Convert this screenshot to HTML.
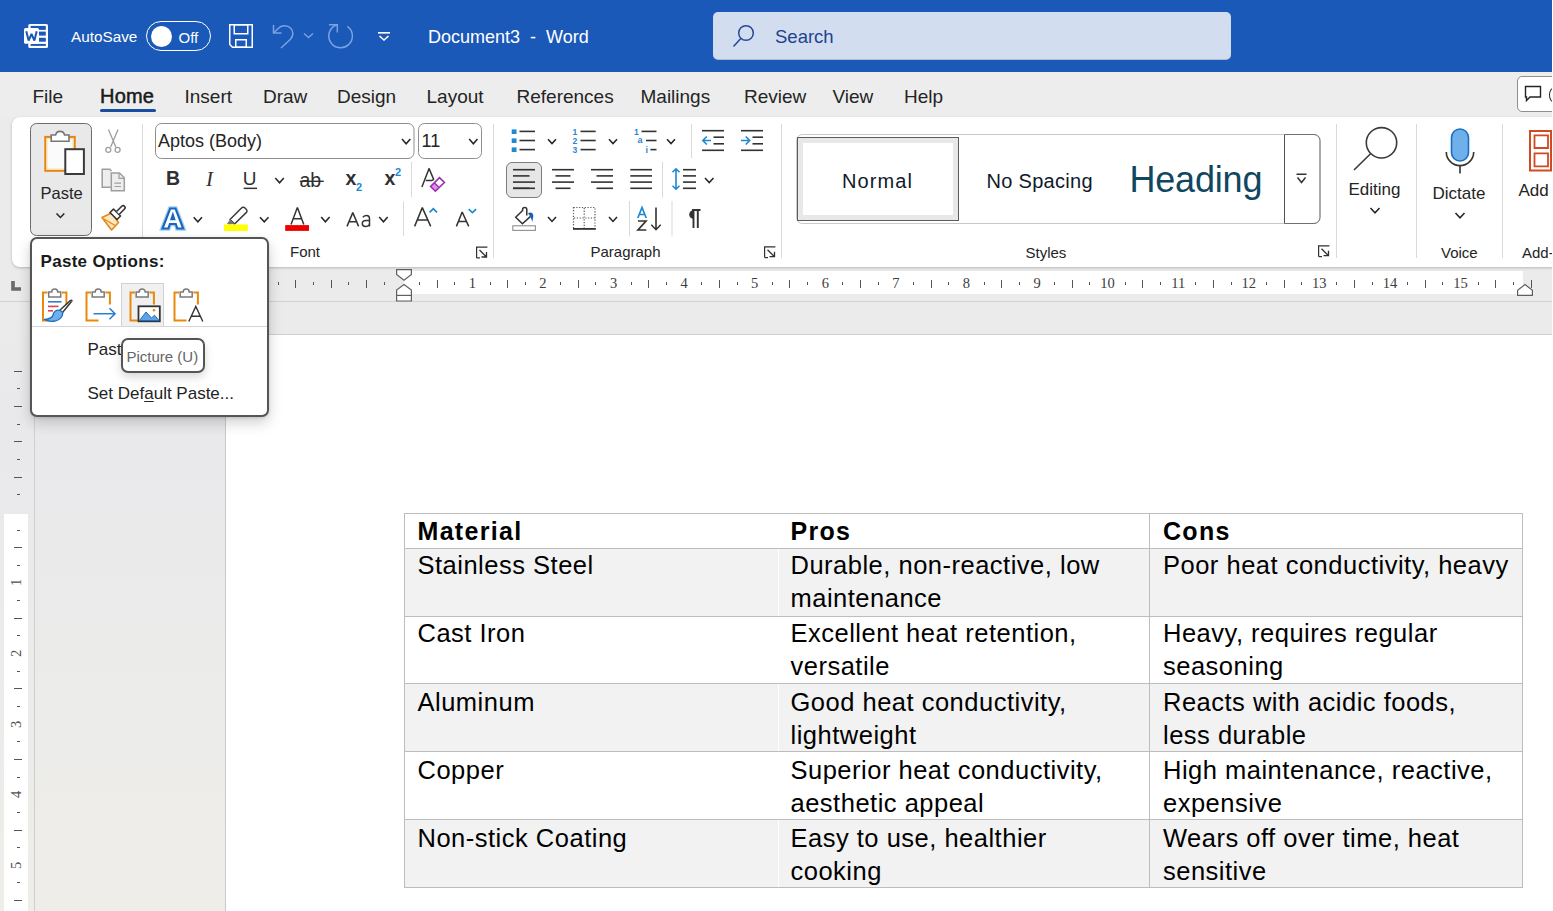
<!DOCTYPE html>
<html><head><meta charset="utf-8"><style>
html,body{margin:0;padding:0;width:1553px;height:911px;overflow:hidden;background:#e9e9eb;}
body{position:relative;font-family:"Liberation Sans",sans-serif;}
.a{position:absolute;}
.t{position:absolute;white-space:pre;line-height:1;}
svg{overflow:visible;}
</style></head><body>
<div class="a" style="left:0px;top:0px;width:1553px;height:911px;background:linear-gradient(to bottom, #ebebeb 0px, #ebebeb 330px, #e9e9ec 430px, #ebebea 650px, #eeede9 911px);"></div>
<div class="a" style="left:0px;top:0px;width:1553px;height:72px;background:#1a59b8;"></div>
<div class="a" style="left:0px;top:72px;width:1553px;height:45px;background:#ededed;"></div>
<div class="a" style="left:0px;top:267px;width:1553px;height:35px;background:#ebebeb;"></div>
<div class="a" style="left:0px;top:301px;width:1553px;height:1px;background:#d2d2d2;"></div>
<div class="a" style="left:226px;top:335px;width:1326px;height:576px;background:#ffffff;"></div>
<div class="a" style="left:225px;top:334px;width:1px;height:577px;background:#c9c9c9;"></div>
<div class="a" style="left:226px;top:334px;width:1326px;height:1px;background:#cfcfcf;"></div>
<div class="a" style="left:0px;top:302px;width:34px;height:609px;background:linear-gradient(to bottom, #ebebeb 0px, #e9e9ec 120px, #ebebea 350px, #eeede9 609px);"></div>
<div class="a" style="left:34px;top:302px;width:1px;height:609px;background:#cfcfcf;"></div>
<div class="a" style="left:4px;top:514px;width:24px;height:397px;background:#ffffff;"></div>
<svg class="a" style="left:24px;top:24px;" width="24" height="24" viewBox="0 0 24 24">
<rect x="4.3" y="0" width="19.7" height="24" rx="1.6" fill="#fff"/>
<rect x="6.6" y="1.9" width="15.2" height="4" fill="#1a59b8"/>
<rect x="15" y="7.6" width="6.8" height="4" fill="#1a59b8"/>
<rect x="15" y="13.8" width="6.8" height="3.9" fill="#1a59b8"/>
<rect x="6.6" y="19.9" width="15.2" height="2" fill="#1a59b8"/>
<rect x="0" y="4" width="15" height="15.8" rx="1.6" fill="#fff"/>
<path d="M2.3 7.3 L4.6 16.6 L7.5 10 L10.4 16.6 L12.7 7.3" fill="none" stroke="#1a59b8" stroke-width="2" stroke-linejoin="bevel"/>
</svg>
<div class="t " style="left:71px;top:29.35px;font-size:15.3px;color:#ffffff;font-weight:400;">AutoSave</div>
<div class="a" style="left:146px;top:21px;width:65px;height:30px;background:transparent;border:1.5px solid #fff;border-radius:15px;box-sizing:border-box;"></div>
<div class="a" style="left:150.5px;top:25.5px;width:21px;height:21px;background:#fff;border-radius:50%;"></div>
<div class="t " style="left:178.5px;top:29.50px;font-size:15px;color:#ffffff;font-weight:400;">Off</div>
<svg class="a" style="left:229px;top:24px;" width="24" height="24" viewBox="0 0 24 24">
<path d="M0.75 0.75 H23.25 V23.25 H3.5 L0.75 20.5 Z" fill="none" stroke="#fff" stroke-width="1.5"/>
<rect x="5.25" y="0.75" width="13.5" height="9" fill="none" stroke="#fff" stroke-width="1.5"/>
<rect x="6.75" y="15.75" width="10.5" height="7.5" fill="none" stroke="#fff" stroke-width="1.5"/>
</svg>
<svg class="a" style="left:272px;top:23px;" width="24" height="26" viewBox="0 0 24 26">
<path d="M1.5 2 V10 H9.5" fill="none" stroke="#7aa3e3" stroke-width="1.5"/>
<path d="M1.8 9.8 L7 4.8 C10 2 15.5 2 18.5 5 C21.8 8.3 21.5 13 18.5 16.2 L9 25" fill="none" stroke="#7aa3e3" stroke-width="1.5"/>
</svg>
<svg class="a" style="left:303px;top:32px;" width="11" height="7" viewBox="0 0 11 7"><path d="M1 1.5 L5.5 5.5 L10 1.5" fill="none" stroke="#7aa3e3" stroke-width="1.4"/></svg>
<svg class="a" style="left:327px;top:23px;" width="27" height="26" viewBox="0 0 27 26">
<path d="M2 1.8 H10.3 V9.5" fill="none" stroke="#7aa3e3" stroke-width="1.5"/>
<path d="M10 1.7 A11.8 11.8 0 1 0 20.4 3.3" fill="none" stroke="#7aa3e3" stroke-width="1.5"/>
</svg>
<svg class="a" style="left:377px;top:31px;" width="14" height="11" viewBox="0 0 14 11">
<rect x="1" y="1" width="12" height="1.6" fill="#fff"/>
<path d="M2.5 5 L7 9 L11.5 5" fill="none" stroke="#fff" stroke-width="1.6"/>
</svg>
<div class="t " style="left:428px;top:27.96px;font-size:18px;color:#ffffff;font-weight:400;">Document3&nbsp; -&nbsp; Word</div>
<div class="a" style="left:713px;top:12px;width:518px;height:48px;background:#d2def0;border-radius:5px;box-shadow:inset 0 -1px 0 rgba(0,0,0,0.15);"></div>
<svg class="a" style="left:732px;top:24px;" width="23" height="24" viewBox="0 0 23 24">
<circle cx="14" cy="9" r="7.3" fill="none" stroke="#25479a" stroke-width="1.5"/>
<line x1="9" y1="14.2" x2="1.5" y2="22.5" stroke="#25479a" stroke-width="1.5"/>
</svg>
<div class="t " style="left:775px;top:28.14px;font-size:18.5px;color:#22428f;font-weight:400;">Search</div>
<div class="t " style="left:32.5px;top:86.92px;font-size:19px;color:#242424;font-weight:400;">File</div>
<div class="t " style="left:100px;top:86.37px;font-size:20px;color:#1a1a1a;font-weight:400;letter-spacing:0.2px;-webkit-text-stroke:0.5px #1a1a1a;">Home</div>
<div class="t " style="left:184.5px;top:86.92px;font-size:19px;color:#242424;font-weight:400;">Insert</div>
<div class="t " style="left:263.0px;top:86.92px;font-size:19px;color:#242424;font-weight:400;">Draw</div>
<div class="t " style="left:337.0px;top:86.92px;font-size:19px;color:#242424;font-weight:400;">Design</div>
<div class="t " style="left:426.5px;top:86.92px;font-size:19px;color:#242424;font-weight:400;">Layout</div>
<div class="t " style="left:516.5px;top:86.92px;font-size:19px;color:#242424;font-weight:400;">References</div>
<div class="t " style="left:640.5px;top:86.92px;font-size:19px;color:#242424;font-weight:400;">Mailings</div>
<div class="t " style="left:744.0px;top:86.92px;font-size:19px;color:#242424;font-weight:400;">Review</div>
<div class="t " style="left:832.5px;top:86.92px;font-size:19px;color:#242424;font-weight:400;">View</div>
<div class="t " style="left:904.0px;top:86.92px;font-size:19px;color:#242424;font-weight:400;">Help</div>
<div class="a" style="left:100px;top:109px;width:56px;height:3px;background:#184d9f;border-radius:2px;"></div>
<div class="a" style="left:1517px;top:76px;width:50px;height:36px;background:#fff;border:1px solid #8f8f8f;border-radius:5px;box-sizing:border-box;"></div>
<svg class="a" style="left:1524px;top:85px;" width="18" height="18" viewBox="0 0 18 18"><path d="M1.5 1.5 H16.5 V12 H6 L2.5 15.5 V12 H1.5 Z" fill="none" stroke="#242424" stroke-width="1.4"/></svg>
<div class="a" style="left:1548.5px;top:88px;width:8px;height:14px;border:1.6px solid #242424;border-radius:50%;box-sizing:border-box;clip-path:inset(0 50% 0 0);"></div>
<div class="a" style="left:12px;top:117px;width:1560px;height:150px;background:#ffffff;border-radius:8px;box-shadow:0 1px 3px rgba(0,0,0,0.22);"></div>
<svg class="a" style="left:0;top:0" width="1553" height="911" viewBox="0 0 1553 911"><rect x="142" y="124" width="1" height="134" fill="#d9d9d9"/><rect x="493" y="124" width="1" height="134" fill="#d9d9d9"/><rect x="781" y="124" width="1" height="134" fill="#d9d9d9"/><rect x="1336" y="124" width="1" height="134" fill="#d9d9d9"/><rect x="1416" y="124" width="1" height="134" fill="#d9d9d9"/><rect x="1502" y="124" width="1" height="134" fill="#d9d9d9"/><rect x="30.5" y="123.5" width="61" height="112" rx="6" fill="#e9e9e9" stroke="#6c6c6c" stroke-width="1"/><rect x="45.3" y="136.9" width="29.4" height="33.9" fill="#fbfbfb" stroke="#e5840f" stroke-width="2"/><rect x="47" y="138.6" width="26" height="30.5" fill="none" stroke="#fcd9a0" stroke-width="1"/><path d="M51.2 141.2 V135 H55.6 A4.6 4.6 0 0 1 64.6 135 H69 V141.2 Z" fill="#fff" stroke="#777" stroke-width="1.6"/><rect x="65.3" y="149.2" width="18.6" height="24.8" fill="#fff" stroke="#3a3a3a" stroke-width="2"/><path d="M56.5 213.5 L60.4 217.5 L64.3 213.5" fill="none" stroke="#262626" stroke-width="1.55"/><path d="M108.5 129.5 L115.8 147 M118 129.5 L110.7 147" fill="none" stroke="#9e9e9e" stroke-width="1.3"/><circle cx="108.3" cy="149.8" r="2.5" fill="none" stroke="#9e9e9e" stroke-width="1.3"/><circle cx="117.6" cy="149.8" r="2.5" fill="none" stroke="#9e9e9e" stroke-width="1.3"/><path d="M110.8 187.3 H102.2 V169.3 H109.8 L111.5 171" fill="#eee" stroke="#9e9e9e" stroke-width="1.5"/><path d="M111.3 173 H119.5 L124.3 177.8 V190.7 H111.3 Z" fill="#eee" stroke="#9e9e9e" stroke-width="1.5"/><path d="M119 173 V178.3 H124.3" fill="none" stroke="#9e9e9e" stroke-width="1.2"/><path d="M114.5 183.2 H121 M114.5 186.5 H121" stroke="#9e9e9e" stroke-width="1.2"/><path d="M102 217.5 L111.5 213 L118.5 222.5 L111.5 230 Z" fill="#fde7c2" stroke="#e38917" stroke-width="1.6" stroke-linejoin="round"/><path d="M104 219 L116 226" stroke="#e38917" stroke-width="1.3"/><path d="M110 212.5 L113.5 209 L120.5 216 L117 219.5 Z" fill="#fff" stroke="#333" stroke-width="1.6" stroke-linejoin="round"/><path d="M116.5 211.5 L121.8 206.3 A1.9 1.9 0 0 1 124.5 209 L119.3 214.3" fill="#fff" stroke="#333" stroke-width="1.6" stroke-linejoin="round"/><rect x="155.5" y="123.5" width="258.5" height="35" rx="6" fill="#fff" stroke="#8e8e8e" stroke-width="1"/><path d="M402 139 L406.15 143.8 L410.3 139" fill="none" stroke="#262626" stroke-width="1.55"/><rect x="418.5" y="123.5" width="63" height="35" rx="6" fill="#fff" stroke="#8e8e8e" stroke-width="1"/><path d="M469.2 139 L473.35 143.8 L477.5 139" fill="none" stroke="#262626" stroke-width="1.55"/><rect x="243.7" y="187.6" width="13.3" height="1.5" fill="#333"/><path d="M275.3 178 L279.55 182.8 L283.8 178" fill="none" stroke="#262626" stroke-width="1.55"/><rect x="299.8" y="180.6" width="24" height="1.4" fill="#333"/><rect x="411" y="162" width="1" height="35" fill="#d9d9d9"/><path d="M421.9 187 L429.1 168.6 L433.6 179.3 Q433 180.4 431.5 180.4 H425.8" fill="none" stroke="#333" stroke-width="1.5" stroke-linejoin="round"/><path d="M430.8 186.6 L434.6 183.1 L438.1 186.9 L435.4 191.2 Z" fill="#e98cf2"/><path d="M439.5 177.6 L444.4 182.5 L435.4 191.2 L430.6 186.5 Z" fill="none" stroke="#9a2fb0" stroke-width="1.6" stroke-linejoin="miter"/><path d="M434.6 183 L438.6 187" stroke="#9a2fb0" stroke-width="1.5"/><path d="M162.5 228.5 L170.2 208.5 H175.5 L183.2 228.5 H177.3 L175.8 224 H169.9 L168.4 228.5 Z M171.4 219.3 H174.3 L172.85 214.8 Z" fill="#fff" stroke="#9fd0f5" stroke-width="4.6" stroke-linejoin="miter"/><path d="M162.5 228.5 L170.2 208.5 H175.5 L183.2 228.5 H177.3 L175.8 224 H169.9 L168.4 228.5 Z M171.4 219.3 H174.3 L172.85 214.8 Z" fill="#fff" stroke="#1a66bd" stroke-width="2.1" stroke-linejoin="miter"/><path d="M193.7 217.3 L197.85 221.8 L202 217.3" fill="none" stroke="#262626" stroke-width="1.55"/><path d="M230 219.5 L241.5 208 A2.3 2.3 0 0 1 245 208 L246.2 209.2 A2.3 2.3 0 0 1 246.2 212.6 L234.5 224 Z" fill="#fff" stroke="#3a3a3a" stroke-width="1.5" stroke-linejoin="round"/><path d="M230 219.5 L227 223.8 L229 224.5 L234.5 224 Z" fill="#777"/><rect x="224" y="224.5" width="23.8" height="6.5" fill="#ffff00"/><path d="M260 217.3 L264.25 221.8 L268.5 217.3" fill="none" stroke="#262626" stroke-width="1.55"/><rect x="285.2" y="225.1" width="23.8" height="5.8" fill="#ee0000"/><path d="M291 224.5 L297.4 207.6 L303.8 224.5 M293.78 218.75 H301.02" fill="none" stroke="#333" stroke-width="1.5" stroke-linejoin="bevel"/><path d="M347 226.4 L352.8 212.6 L358.6 226.4 M349.57 221.71 H356.03" fill="none" stroke="#333" stroke-width="1.5" stroke-linejoin="bevel"/><path d="M362.8 217.3 Q364.5 215.6 366.5 215.6 Q369.5 215.6 369.5 219 V226.4 M369.5 220.6 H366 Q362.3 220.6 362.3 223.5 Q362.3 226.5 365.5 226.5 Q368 226.5 369.5 224.3" fill="none" stroke="#333" stroke-width="1.5"/><path d="M414.6 226.4 L422.3 207.6 L430.7 226.4 M417.82 220.01 H427.24" fill="none" stroke="#333" stroke-width="1.5" stroke-linejoin="bevel"/><path d="M456.4 226.4 L462.2 212 L468.7 226.4 M458.97 221.50 H465.89" fill="none" stroke="#333" stroke-width="1.5" stroke-linejoin="bevel"/><path d="M321.2 217 L325.4 221.8 L329.6 217" fill="none" stroke="#262626" stroke-width="1.55"/><path d="M379.2 217 L383.45 221.8 L387.7 217" fill="none" stroke="#262626" stroke-width="1.55"/><rect x="403" y="201.5" width="1" height="34.5" fill="#d9d9d9"/><path d="M429.6 212.4 L433.3 208.7 L437 212.4" fill="none" stroke="#1e88d2" stroke-width="1.7"/><path d="M468.7 209.2 L472.4 212.6 L476.1 209.2" fill="none" stroke="#1e88d2" stroke-width="1.7"/><path d="M476.6 257.9 V247.1 H487.4" fill="none" stroke="#303030" stroke-width="1.2"/><path d="M479.5 250.0 L486.5 257.0 M481.5 257.0 H486.5 V252.0" fill="none" stroke="#303030" stroke-width="1.3"/><path d="M476.6 257.9 H480" fill="none" stroke="#303030" stroke-width="1.2"/><rect x="511.7" y="129.39999999999998" width="4.8" height="4.6" fill="#1e88d2"/><rect x="511.7" y="138.39999999999998" width="4.8" height="4.6" fill="#1e88d2"/><rect x="511.7" y="147.39999999999998" width="4.8" height="4.6" fill="#1e88d2"/><rect x="519.5" y="130.6" width="15.5" height="1.6" fill="#333"/><rect x="519.5" y="139.7" width="15.5" height="1.6" fill="#333"/><rect x="519.5" y="148.79999999999998" width="15.5" height="1.6" fill="#333"/><path d="M548 139.2 L552.0 143.6 L556 139.2" fill="none" stroke="#262626" stroke-width="1.55"/><rect x="580.5" y="130.6" width="15.200000000000045" height="1.6" fill="#333"/><rect x="580.5" y="139.7" width="15.200000000000045" height="1.6" fill="#333"/><rect x="580.5" y="148.79999999999998" width="15.200000000000045" height="1.6" fill="#333"/><path d="M609 139.2 L613.0 143.6 L617 139.2" fill="none" stroke="#262626" stroke-width="1.55"/><rect x="641.5" y="130.6" width="15.0" height="1.6" fill="#333"/><rect x="646" y="139.7" width="10.5" height="1.6" fill="#333"/><rect x="650.4" y="148.79999999999998" width="6.100000000000023" height="1.6" fill="#333"/><path d="M667 139.2 L671.0 143.6 L675 139.2" fill="none" stroke="#262626" stroke-width="1.55"/><rect x="691" y="124" width="1" height="34" fill="#d9d9d9"/><rect x="702" y="129.89999999999998" width="22" height="1.6" fill="#333"/><rect x="702" y="149.5" width="22" height="1.6" fill="#333"/><rect x="713.5" y="136.39999999999998" width="10.5" height="1.6" fill="#333"/><rect x="713.5" y="143.0" width="10.5" height="1.6" fill="#333"/><path d="M711 140.5 H703 M706.8 136.5 L702.8 140.5 L706.8 144.5" fill="none" stroke="#1e88d2" stroke-width="1.6"/><rect x="741" y="129.89999999999998" width="22" height="1.6" fill="#333"/><rect x="741" y="149.5" width="22" height="1.6" fill="#333"/><rect x="752.5" y="136.39999999999998" width="10.5" height="1.6" fill="#333"/><rect x="752.5" y="143.0" width="10.5" height="1.6" fill="#333"/><path d="M741 140.5 H749.5 M745.7 136.5 L749.7 140.5 L745.7 144.5" fill="none" stroke="#1e88d2" stroke-width="1.6"/><rect x="506.5" y="162.5" width="35" height="35" rx="5.5" fill="#e6e6e6" stroke="#7c7c7c" stroke-width="1"/><rect x="513" y="168.89999999999998" width="22" height="1.6" fill="#333"/><rect x="513" y="187.5" width="22" height="1.6" fill="#333"/><rect x="513" y="175.1" width="16.5" height="1.6" fill="#333"/><rect x="513" y="181.29999999999998" width="22" height="1.6" fill="#333"/><rect x="513" y="187.5" width="16.5" height="1.6" fill="#333"/><rect x="552" y="168.89999999999998" width="22" height="1.6" fill="#333"/><rect x="552" y="181.29999999999998" width="22" height="1.6" fill="#333"/><rect x="555.5" y="175.1" width="15.0" height="1.6" fill="#333"/><rect x="555.5" y="187.5" width="15.0" height="1.6" fill="#333"/><rect x="591" y="168.89999999999998" width="22" height="1.6" fill="#333"/><rect x="591" y="181.29999999999998" width="22" height="1.6" fill="#333"/><rect x="596.5" y="175.1" width="16.5" height="1.6" fill="#333"/><rect x="596.5" y="187.5" width="16.5" height="1.6" fill="#333"/><rect x="630.3" y="168.89999999999998" width="21.700000000000045" height="1.6" fill="#333"/><rect x="630.3" y="175.1" width="21.700000000000045" height="1.6" fill="#333"/><rect x="630.3" y="181.29999999999998" width="21.700000000000045" height="1.6" fill="#333"/><rect x="630.3" y="187.5" width="21.700000000000045" height="1.6" fill="#333"/><rect x="662" y="162" width="1" height="35.5" fill="#d9d9d9"/><rect x="683" y="168.89999999999998" width="13" height="1.6" fill="#333"/><rect x="683" y="175.1" width="13" height="1.6" fill="#333"/><rect x="683" y="181.29999999999998" width="13" height="1.6" fill="#333"/><rect x="683" y="187.5" width="13" height="1.6" fill="#333"/><path d="M676 169 V189 M672.5 172.3 L676 168.8 L679.5 172.3 M672.5 185.7 L676 189.2 L679.5 185.7" fill="none" stroke="#1e88d2" stroke-width="1.6"/><path d="M705 178 L709.25 182.6 L713.5 178" fill="none" stroke="#262626" stroke-width="1.55"/><path d="M522.4 210.8 L515.7 217.3 L522.4 223.8 L530.3 216.6" fill="none" stroke="#333" stroke-width="1.5" stroke-linejoin="miter"/><path d="M522.6 211 V209.6 A2.1 2.1 0 0 1 526.8 209.6 V215.4" fill="none" stroke="#333" stroke-width="1.5"/><path d="M528 213.2 C530.5 211.3 533.8 213 533.3 216.5 C533 218.5 532.6 220.2 532.4 222 C531.6 219 530.3 216.3 528 213.2 Z" fill="#1a5fb4"/><rect x="512.8" y="225.8" width="22.6" height="4.6" fill="#fff" stroke="#8f8f8f" stroke-width="1.1"/><path d="M548 217 L552.0 221.4 L556 217" fill="none" stroke="#262626" stroke-width="1.55"/><rect x="573.5" y="207.5" width="21.5" height="21" fill="none" stroke="#555" stroke-width="1.2" stroke-dasharray="1.2 1.6"/><path d="M584.2 208 V228 M574 218 H594.5" fill="none" stroke="#555" stroke-width="1.2" stroke-dasharray="1.2 1.6"/><rect x="573" y="228" width="22.8" height="1.8" fill="#333"/><path d="M609 217 L613.0 221.4 L617 217" fill="none" stroke="#262626" stroke-width="1.55"/><rect x="629" y="201" width="1" height="35.5" fill="#d9d9d9"/><path d="M637.8 218 L642 207.5 L646.2 218 M639.2 214.5 H644.8" fill="none" stroke="#1e88d2" stroke-width="1.7"/><path d="M638 221 H646 L638 230 H646.3" fill="none" stroke="#333" stroke-width="1.7"/><path d="M656 207.5 V229.5 M651.3 224.8 L656 229.7 L660.7 224.8" fill="none" stroke="#333" stroke-width="1.6"/><rect x="671.5" y="201" width="1" height="35.5" fill="#d9d9d9"/><path d="M692 210 H700.5 M693.5 210 V228 M697.8 210 V228" fill="none" stroke="#333" stroke-width="1.9"/><path d="M693.5 210.2 A4.3 4.3 0 0 0 693.5 218.8 Z" fill="#333"/><path d="M764.6 257.59999999999997 V246.79999999999998 H775.4" fill="none" stroke="#303030" stroke-width="1.2"/><path d="M767.5 249.7 L774.5 256.7 M769.5 256.7 H774.5 V251.7" fill="none" stroke="#303030" stroke-width="1.3"/><path d="M764.6 257.59999999999997 H768" fill="none" stroke="#303030" stroke-width="1.2"/><rect x="796.5" y="134.5" width="523.5" height="89" rx="6" fill="#fff" stroke="#c9c9c9" stroke-width="1"/><rect x="797.5" y="137.5" width="161" height="83" fill="#fff" stroke="#5c5c5c" stroke-width="1"/><rect x="800.5" y="140.5" width="155" height="77" fill="none" stroke="#e8e8e8" stroke-width="5"/><path d="M1284.5 134.5 V223.5" stroke="#505050" stroke-width="1"/><path d="M1284.5 134.5 H1314 A6 6 0 0 1 1320 140.5 V217.5 A6 6 0 0 1 1314 223.5 H1284.5" fill="none" stroke="#707070" stroke-width="1"/><rect x="1296.5" y="173.5" width="10" height="1.5" fill="#333"/><path d="M1297.5 177.5 L1301.5 182.5 L1305.5 177.5" fill="none" stroke="#333" stroke-width="1.5"/><path d="M1318.6 256.59999999999997 V245.79999999999998 H1329.4" fill="none" stroke="#303030" stroke-width="1.2"/><path d="M1321.5 248.7 L1328.5 255.7 M1323.5 255.7 H1328.5 V250.7" fill="none" stroke="#303030" stroke-width="1.3"/><path d="M1318.6 256.59999999999997 H1322" fill="none" stroke="#303030" stroke-width="1.2"/><circle cx="1381.5" cy="142.8" r="15.2" fill="none" stroke="#3a3a3a" stroke-width="1.6"/><path d="M1370.8 153.5 L1354 170" stroke="#3a3a3a" stroke-width="1.6"/><path d="M1370.5 208 L1375.0 212.8 L1379.5 208" fill="none" stroke="#262626" stroke-width="1.55"/><rect x="1451.5" y="129" width="17" height="32" rx="8.5" fill="#6fb0ea" stroke="#1a6fc4" stroke-width="1.6"/><path d="M1446.3 152 A13.7 13.7 0 0 0 1473.7 152 M1460 166 V173.5" fill="none" stroke="#333" stroke-width="1.6"/><path d="M1455.5 213 L1460.0 217.8 L1464.5 213" fill="none" stroke="#262626" stroke-width="1.55"/><rect x="1530" y="131" width="40" height="39.5" fill="none" stroke="#d04a22" stroke-width="2"/><path d="M1534.5 135.3 H1548 V148 H1534.5 Z M1534.5 153.3 H1548 V166.3 H1534.5 Z" fill="none" stroke="#d04a22" stroke-width="1.8"/><rect x="1550" y="131" width="2" height="40" fill="#d04a22"/></svg>
<div class="t " style="left:40.5px;top:184.53px;font-size:16.5px;color:#242424;font-weight:400;">Paste</div>
<div class="t " style="left:158px;top:132.26px;font-size:18px;color:#242424;font-weight:400;">Aptos (Body)</div>
<div class="t " style="left:421.5px;top:132.46px;font-size:18px;color:#242424;font-weight:400;">11</div>
<div class="t " style="left:166px;top:169.09px;font-size:19.5px;color:#303030;font-weight:700;">B</div>
<div class="t" style="left:206px;top:169px;font-size:21px;font-family:'Liberation Serif',serif;font-style:italic;color:#303030;">I</div>
<div class="t " style="left:242.7px;top:169.22px;font-size:19px;color:#303030;font-weight:400;">U</div>
<div class="t " style="left:299.5px;top:170.79px;font-size:19.5px;color:#303030;font-weight:400;">ab</div>
<div class="t " style="left:345.5px;top:169.49px;font-size:19.5px;color:#303030;font-weight:700;">x</div>
<div class="t " style="left:356px;top:182.39px;font-size:11px;color:#1e88d2;font-weight:700;">2</div>
<div class="t " style="left:384.5px;top:169.49px;font-size:19.5px;color:#303030;font-weight:700;">x</div>
<div class="t " style="left:395px;top:167.19px;font-size:11px;color:#1e88d2;font-weight:700;">2</div>
<div class="t " style="left:290px;top:244.40px;font-size:15px;color:#242424;font-weight:400;">Font</div>
<div class="t " style="left:590.5px;top:244.30px;font-size:15px;color:#242424;font-weight:400;">Paragraph</div>
<div class="t " style="left:1025.5px;top:244.70px;font-size:15px;color:#242424;font-weight:400;">Styles</div>
<div class="t " style="left:842px;top:170.57px;font-size:20px;color:#0e1a2b;font-weight:400;letter-spacing:1.1px;">Normal</div>
<div class="t " style="left:986.5px;top:170.57px;font-size:20px;color:#0e1a2b;font-weight:400;letter-spacing:0.3px;">No Spacing</div>
<div class="t " style="left:1129.5px;top:162.03px;font-size:36px;color:#0f4761;font-weight:400;letter-spacing:-0.2px;">Heading</div>
<div class="t " style="left:1348.5px;top:180.61px;font-size:17px;color:#242424;font-weight:400;">Editing</div>
<div class="t " style="left:1432.5px;top:185.01px;font-size:17px;color:#242424;font-weight:400;">Dictate</div>
<div class="t " style="left:1441px;top:244.90px;font-size:15px;color:#242424;font-weight:400;">Voice</div>
<div class="t " style="left:1518.5px;top:182.11px;font-size:17px;color:#242424;font-weight:400;">Add</div>
<div class="t " style="left:1522px;top:244.90px;font-size:15px;color:#242424;font-weight:400;">Add-</div>
<div class="t " style="left:572.5px;top:127.72px;font-size:8.6px;color:#2f86cc;font-weight:700;">1</div>
<div class="t " style="left:572.5px;top:136.72px;font-size:8.6px;color:#2f86cc;font-weight:700;">2</div>
<div class="t " style="left:572.5px;top:145.92px;font-size:8.6px;color:#2f86cc;font-weight:700;">3</div>
<div class="t " style="left:634px;top:127.72px;font-size:8.6px;color:#2f86cc;font-weight:700;">1</div>
<div class="t " style="left:637.6px;top:136.38px;font-size:9px;color:#2f86cc;font-weight:700;">a</div>
<div class="t " style="left:645.5px;top:145.58px;font-size:9px;color:#2f86cc;font-weight:700;">i</div>
<div class="a" style="left:404px;top:271px;width:1119px;height:23px;background:#ffffff;"></div>
<svg class="a" style="left:0;top:0" width="1553" height="911" viewBox="0 0 1553 911"><rect x="278" y="282" width="1" height="3" fill="#555"/><rect x="295" y="280" width="1" height="8" fill="#555"/><rect x="313" y="282" width="1" height="3" fill="#555"/><rect x="331" y="280" width="1" height="8" fill="#555"/><rect x="348" y="282" width="1" height="3" fill="#555"/><rect x="366" y="280" width="1" height="8" fill="#555"/><rect x="384" y="282" width="1" height="3" fill="#555"/><rect x="419" y="282" width="1" height="3" fill="#555"/><rect x="437" y="280" width="1" height="8" fill="#555"/><rect x="454" y="282" width="1" height="3" fill="#555"/><rect x="490" y="282" width="1" height="3" fill="#555"/><rect x="507" y="280" width="1" height="8" fill="#555"/><rect x="525" y="282" width="1" height="3" fill="#555"/><rect x="560" y="282" width="1" height="3" fill="#555"/><rect x="578" y="280" width="1" height="8" fill="#555"/><rect x="595" y="282" width="1" height="3" fill="#555"/><rect x="631" y="282" width="1" height="3" fill="#555"/><rect x="648" y="280" width="1" height="8" fill="#555"/><rect x="666" y="282" width="1" height="3" fill="#555"/><rect x="701" y="282" width="1" height="3" fill="#555"/><rect x="719" y="280" width="1" height="8" fill="#555"/><rect x="737" y="282" width="1" height="3" fill="#555"/><rect x="772" y="282" width="1" height="3" fill="#555"/><rect x="789" y="280" width="1" height="8" fill="#555"/><rect x="807" y="282" width="1" height="3" fill="#555"/><rect x="842" y="282" width="1" height="3" fill="#555"/><rect x="860" y="280" width="1" height="8" fill="#555"/><rect x="878" y="282" width="1" height="3" fill="#555"/><rect x="913" y="282" width="1" height="3" fill="#555"/><rect x="931" y="280" width="1" height="8" fill="#555"/><rect x="948" y="282" width="1" height="3" fill="#555"/><rect x="984" y="282" width="1" height="3" fill="#555"/><rect x="1001" y="280" width="1" height="8" fill="#555"/><rect x="1019" y="282" width="1" height="3" fill="#555"/><rect x="1054" y="282" width="1" height="3" fill="#555"/><rect x="1072" y="280" width="1" height="8" fill="#555"/><rect x="1089" y="282" width="1" height="3" fill="#555"/><rect x="1125" y="282" width="1" height="3" fill="#555"/><rect x="1142" y="280" width="1" height="8" fill="#555"/><rect x="1160" y="282" width="1" height="3" fill="#555"/><rect x="1195" y="282" width="1" height="3" fill="#555"/><rect x="1213" y="280" width="1" height="8" fill="#555"/><rect x="1231" y="282" width="1" height="3" fill="#555"/><rect x="1266" y="282" width="1" height="3" fill="#555"/><rect x="1284" y="280" width="1" height="8" fill="#555"/><rect x="1301" y="282" width="1" height="3" fill="#555"/><rect x="1336" y="282" width="1" height="3" fill="#555"/><rect x="1354" y="280" width="1" height="8" fill="#555"/><rect x="1372" y="282" width="1" height="3" fill="#555"/><rect x="1407" y="282" width="1" height="3" fill="#555"/><rect x="1425" y="280" width="1" height="8" fill="#555"/><rect x="1442" y="282" width="1" height="3" fill="#555"/><rect x="1478" y="282" width="1" height="3" fill="#555"/><rect x="1495" y="280" width="1" height="8" fill="#555"/><rect x="1513" y="282" width="1" height="3" fill="#555"/><rect x="1531" y="280" width="1" height="8" fill="#555"/><path d="M396.6 269.7 H411.4 V274.5 L404 280.3 L396.6 274.5 Z" fill="#fff" stroke="#606060" stroke-width="1.2"/><path d="M404 284.4 L411.4 290 V301 H396.6 V290 Z" fill="#fff" stroke="#606060" stroke-width="1.2"/><path d="M396.6 295.4 H411.4" stroke="#606060" stroke-width="1.2"/><path d="M1525 284.6 L1532.4 290.2 V295.3 H1517.6 V290.2 Z" fill="#fff" stroke="#606060" stroke-width="1.2"/><path d="M13 281 V289 H21" fill="none" stroke="#6a6a6a" stroke-width="3.6"/><rect x="14" y="371" width="8" height="1" fill="#555"/><rect x="17" y="388" width="3" height="1" fill="#555"/><rect x="14" y="406" width="8" height="1" fill="#555"/><rect x="17" y="424" width="3" height="1" fill="#555"/><rect x="14" y="441" width="8" height="1" fill="#555"/><rect x="17" y="459" width="3" height="1" fill="#555"/><rect x="14" y="477" width="8" height="1" fill="#555"/><rect x="17" y="494" width="3" height="1" fill="#555"/><rect x="17" y="530" width="3" height="1" fill="#555"/><rect x="14" y="547" width="8" height="1" fill="#555"/><rect x="17" y="565" width="3" height="1" fill="#555"/><rect x="17" y="600" width="3" height="1" fill="#555"/><rect x="14" y="618" width="8" height="1" fill="#555"/><rect x="17" y="635" width="3" height="1" fill="#555"/><rect x="17" y="671" width="3" height="1" fill="#555"/><rect x="14" y="688" width="8" height="1" fill="#555"/><rect x="17" y="706" width="3" height="1" fill="#555"/><rect x="17" y="741" width="3" height="1" fill="#555"/><rect x="14" y="759" width="8" height="1" fill="#555"/><rect x="17" y="777" width="3" height="1" fill="#555"/><rect x="17" y="812" width="3" height="1" fill="#555"/><rect x="14" y="830" width="8" height="1" fill="#555"/><rect x="17" y="847" width="3" height="1" fill="#555"/><rect x="17" y="882" width="3" height="1" fill="#555"/><rect x="14" y="900" width="8" height="1" fill="#555"/></svg>
<div class="t" style="left:452.38px;width:40px;text-align:center;top:275.73px;font-size:14.5px;font-family:'Liberation Serif',serif;color:#3c3c3c;">1</div>
<div class="t" style="left:522.96px;width:40px;text-align:center;top:275.73px;font-size:14.5px;font-family:'Liberation Serif',serif;color:#3c3c3c;">2</div>
<div class="t" style="left:593.54px;width:40px;text-align:center;top:275.73px;font-size:14.5px;font-family:'Liberation Serif',serif;color:#3c3c3c;">3</div>
<div class="t" style="left:664.12px;width:40px;text-align:center;top:275.73px;font-size:14.5px;font-family:'Liberation Serif',serif;color:#3c3c3c;">4</div>
<div class="t" style="left:734.70px;width:40px;text-align:center;top:275.73px;font-size:14.5px;font-family:'Liberation Serif',serif;color:#3c3c3c;">5</div>
<div class="t" style="left:805.28px;width:40px;text-align:center;top:275.73px;font-size:14.5px;font-family:'Liberation Serif',serif;color:#3c3c3c;">6</div>
<div class="t" style="left:875.86px;width:40px;text-align:center;top:275.73px;font-size:14.5px;font-family:'Liberation Serif',serif;color:#3c3c3c;">7</div>
<div class="t" style="left:946.44px;width:40px;text-align:center;top:275.73px;font-size:14.5px;font-family:'Liberation Serif',serif;color:#3c3c3c;">8</div>
<div class="t" style="left:1017.02px;width:40px;text-align:center;top:275.73px;font-size:14.5px;font-family:'Liberation Serif',serif;color:#3c3c3c;">9</div>
<div class="t" style="left:1087.60px;width:40px;text-align:center;top:275.73px;font-size:14.5px;font-family:'Liberation Serif',serif;color:#3c3c3c;">10</div>
<div class="t" style="left:1158.18px;width:40px;text-align:center;top:275.73px;font-size:14.5px;font-family:'Liberation Serif',serif;color:#3c3c3c;">11</div>
<div class="t" style="left:1228.76px;width:40px;text-align:center;top:275.73px;font-size:14.5px;font-family:'Liberation Serif',serif;color:#3c3c3c;">12</div>
<div class="t" style="left:1299.34px;width:40px;text-align:center;top:275.73px;font-size:14.5px;font-family:'Liberation Serif',serif;color:#3c3c3c;">13</div>
<div class="t" style="left:1369.92px;width:40px;text-align:center;top:275.73px;font-size:14.5px;font-family:'Liberation Serif',serif;color:#3c3c3c;">14</div>
<div class="t" style="left:1440.50px;width:40px;text-align:center;top:275.73px;font-size:14.5px;font-family:'Liberation Serif',serif;color:#3c3c3c;">15</div>
<div class="t" style="left:0px;width:40px;text-align:center;top:577.43px;font-size:14.5px;font-family:'Liberation Serif',serif;color:#505050;transform-origin:18px 7.25px;transform:translateX(-2px) rotate(-90deg);">1</div>
<div class="t" style="left:0px;width:40px;text-align:center;top:648.01px;font-size:14.5px;font-family:'Liberation Serif',serif;color:#505050;transform-origin:18px 7.25px;transform:translateX(-2px) rotate(-90deg);">2</div>
<div class="t" style="left:0px;width:40px;text-align:center;top:718.59px;font-size:14.5px;font-family:'Liberation Serif',serif;color:#505050;transform-origin:18px 7.25px;transform:translateX(-2px) rotate(-90deg);">3</div>
<div class="t" style="left:0px;width:40px;text-align:center;top:789.17px;font-size:14.5px;font-family:'Liberation Serif',serif;color:#505050;transform-origin:18px 7.25px;transform:translateX(-2px) rotate(-90deg);">4</div>
<div class="t" style="left:0px;width:40px;text-align:center;top:859.75px;font-size:14.5px;font-family:'Liberation Serif',serif;color:#505050;transform-origin:18px 7.25px;transform:translateX(-2px) rotate(-90deg);">5</div>
<div class="a" style="left:405px;top:549px;width:1117px;height:67px;background:#f2f2f2;"></div>
<div class="a" style="left:778px;top:549px;width:1px;height:67px;background:#ffffff;"></div>
<div class="a" style="left:405px;top:684px;width:1117px;height:67px;background:#f2f2f2;"></div>
<div class="a" style="left:778px;top:684px;width:1px;height:67px;background:#ffffff;"></div>
<div class="a" style="left:405px;top:820px;width:1117px;height:67px;background:#f2f2f2;"></div>
<div class="a" style="left:778px;top:820px;width:1px;height:67px;background:#ffffff;"></div>
<div class="a" style="left:404px;top:513px;width:1119px;height:1px;background:#bdbdbd;"></div>
<div class="a" style="left:404px;top:548px;width:1119px;height:1px;background:#bdbdbd;"></div>
<div class="a" style="left:404px;top:616px;width:1119px;height:1px;background:#bdbdbd;"></div>
<div class="a" style="left:404px;top:683px;width:1119px;height:1px;background:#bdbdbd;"></div>
<div class="a" style="left:404px;top:751px;width:1119px;height:1px;background:#bdbdbd;"></div>
<div class="a" style="left:404px;top:819px;width:1119px;height:1px;background:#bdbdbd;"></div>
<div class="a" style="left:404px;top:887px;width:1119px;height:1px;background:#bdbdbd;"></div>
<div class="a" style="left:404px;top:513px;width:1px;height:375px;background:#bdbdbd;"></div>
<div class="a" style="left:1522px;top:513px;width:1px;height:375px;background:#bdbdbd;"></div>
<div class="a" style="left:1149px;top:513px;width:1px;height:375px;background:#bdbdbd;"></div>
<div class="t " style="left:417.5px;top:519.14px;font-size:25px;color:#000;font-weight:700;letter-spacing:1.3px;">Material</div>
<div class="t " style="left:790.5px;top:519.14px;font-size:25px;color:#000;font-weight:700;letter-spacing:1.3px;">Pros</div>
<div class="t " style="left:1163px;top:519.14px;font-size:25px;color:#000;font-weight:700;letter-spacing:1.3px;">Cons</div>
<div class="t " style="left:417.5px;top:553.21px;font-size:25.5px;color:#000;font-weight:400;letter-spacing:0.5px;">Stainless Steel</div>
<div class="t " style="left:790.5px;top:553.21px;font-size:25.5px;color:#000;font-weight:400;letter-spacing:0.5px;">Durable, non-reactive, low</div>
<div class="t " style="left:790.5px;top:586.21px;font-size:25.5px;color:#000;font-weight:400;letter-spacing:0.5px;">maintenance</div>
<div class="t " style="left:1163px;top:553.21px;font-size:25.5px;color:#000;font-weight:400;letter-spacing:0.5px;">Poor heat conductivity, heavy</div>
<div class="t " style="left:417.5px;top:620.91px;font-size:25.5px;color:#000;font-weight:400;letter-spacing:0.5px;">Cast Iron</div>
<div class="t " style="left:790.5px;top:620.91px;font-size:25.5px;color:#000;font-weight:400;letter-spacing:0.5px;">Excellent heat retention,</div>
<div class="t " style="left:790.5px;top:653.91px;font-size:25.5px;color:#000;font-weight:400;letter-spacing:0.5px;">versatile</div>
<div class="t " style="left:1163px;top:620.91px;font-size:25.5px;color:#000;font-weight:400;letter-spacing:0.5px;">Heavy, requires regular</div>
<div class="t " style="left:1163px;top:653.91px;font-size:25.5px;color:#000;font-weight:400;letter-spacing:0.5px;">seasoning</div>
<div class="t " style="left:417.5px;top:689.71px;font-size:25.5px;color:#000;font-weight:400;letter-spacing:0.5px;">Aluminum</div>
<div class="t " style="left:790.5px;top:689.71px;font-size:25.5px;color:#000;font-weight:400;letter-spacing:0.5px;">Good heat conductivity,</div>
<div class="t " style="left:790.5px;top:722.71px;font-size:25.5px;color:#000;font-weight:400;letter-spacing:0.5px;">lightweight</div>
<div class="t " style="left:1163px;top:689.71px;font-size:25.5px;color:#000;font-weight:400;letter-spacing:0.5px;">Reacts with acidic foods,</div>
<div class="t " style="left:1163px;top:722.71px;font-size:25.5px;color:#000;font-weight:400;letter-spacing:0.5px;">less durable</div>
<div class="t " style="left:417.5px;top:757.51px;font-size:25.5px;color:#000;font-weight:400;letter-spacing:0.5px;">Copper</div>
<div class="t " style="left:790.5px;top:757.51px;font-size:25.5px;color:#000;font-weight:400;letter-spacing:0.5px;">Superior heat conductivity,</div>
<div class="t " style="left:790.5px;top:790.51px;font-size:25.5px;color:#000;font-weight:400;letter-spacing:0.5px;">aesthetic appeal</div>
<div class="t " style="left:1163px;top:757.51px;font-size:25.5px;color:#000;font-weight:400;letter-spacing:0.5px;">High maintenance, reactive,</div>
<div class="t " style="left:1163px;top:790.51px;font-size:25.5px;color:#000;font-weight:400;letter-spacing:0.5px;">expensive</div>
<div class="t " style="left:417.5px;top:825.81px;font-size:25.5px;color:#000;font-weight:400;letter-spacing:0.5px;">Non-stick Coating</div>
<div class="t " style="left:790.5px;top:825.81px;font-size:25.5px;color:#000;font-weight:400;letter-spacing:0.5px;">Easy to use, healthier</div>
<div class="t " style="left:790.5px;top:858.81px;font-size:25.5px;color:#000;font-weight:400;letter-spacing:0.5px;">cooking</div>
<div class="t " style="left:1163px;top:825.81px;font-size:25.5px;color:#000;font-weight:400;letter-spacing:0.5px;">Wears off over time, heat</div>
<div class="t " style="left:1163px;top:858.81px;font-size:25.5px;color:#000;font-weight:400;letter-spacing:0.5px;">sensitive</div>
<div class="a" style="left:30px;top:236.5px;width:239px;height:180px;background:#fff;border:2px solid #555;border-radius:7px;box-sizing:border-box;box-shadow:0 6px 14px rgba(0,0,0,0.18), 0 1px 3px rgba(0,0,0,0.12);"></div>
<div class="t " style="left:40.5px;top:252.61px;font-size:17px;color:#1a1a1a;font-weight:700;letter-spacing:0.3px;">Paste Options:</div>
<div class="a" style="left:120.5px;top:282.5px;width:43px;height:44px;background:#f0f0f0;border:1px solid #d2d2d2;box-sizing:border-box;"></div>
<div class="a" style="left:32px;top:326px;width:235px;height:1px;background:#d6d6d6;"></div>
<svg class="a" style="left:0;top:0" width="1553" height="911" viewBox="0 0 1553 911"><path d="M47.5 292.4 H43 V320.4 H55" fill="none" stroke="#e8890c" stroke-width="2"/><path d="M61.900000000000006 292.4 H66.4 V304.4" fill="none" stroke="#e8890c" stroke-width="2"/><path d="M48.7 297.0 V291.9 H51.7 A3 3 0 0 1 57.7 291.9 H60.7 V297.0 Z" fill="#fff" stroke="#7a7a7a" stroke-width="1.5"/><path d="M48 301.8 H61.5" stroke="#2f7fcf" stroke-width="1.6"/><path d="M48 306.4 H58.5" stroke="#d9434b" stroke-width="1.6"/><path d="M48 310.8 H53" stroke="#d9434b" stroke-width="1.6"/><path d="M71.5 301.5 C72.5 300.5 71.5 299.7 70.3 300.6 L60 310" fill="none" stroke="#3a3a3a" stroke-width="1.5"/><path d="M71.5 301.5 L62.5 312.5" fill="none" stroke="#3a3a3a" stroke-width="1.5"/><path d="M60 310.3 C56 309.5 53.5 312 53 315 C52.5 317.5 49.5 319 44.5 319.5 C50 322.5 58 322 61.5 317 C63 314.5 62.7 312 62.5 312.3 Z" fill="#6fb0ea" stroke="#1a6fc4" stroke-width="1.3" stroke-linejoin="round"/><path d="M91.0 292.4 H86.5 V320.4 H98.5" fill="none" stroke="#e8890c" stroke-width="2"/><path d="M105.4 292.4 H109.9 V304.4" fill="none" stroke="#e8890c" stroke-width="2"/><path d="M92.2 297.0 V291.9 H95.2 A3 3 0 0 1 101.2 291.9 H104.2 V297.0 Z" fill="#fff" stroke="#7a7a7a" stroke-width="1.5"/><path d="M93.5 313.8 H115 M109.5 308.3 L115 313.8 L109.5 319.3" fill="none" stroke="#2f7fcf" stroke-width="1.6"/><path d="M135.0 292.4 H130.5 V320.4 H142.5" fill="none" stroke="#e8890c" stroke-width="2"/><path d="M149.4 292.4 H153.9 V304.4" fill="none" stroke="#e8890c" stroke-width="2"/><path d="M136.2 297.0 V291.9 H139.2 A3 3 0 0 1 145.2 291.9 H148.2 V297.0 Z" fill="#fff" stroke="#7a7a7a" stroke-width="1.5"/><rect x="138.5" y="306.3" width="21.3" height="15" fill="#fff" stroke="#333" stroke-width="1.8"/><path d="M139.5 320.5 L146 312 L151.5 318 L154.5 315.2 L159 320.5 Z" fill="#5fa3e6" stroke="#1a6fc4" stroke-width="1"/><circle cx="154" cy="310.2" r="1.3" fill="#e8890c"/><path d="M179.0 292.4 H174.5 V320.4 H186.5" fill="none" stroke="#e8890c" stroke-width="2"/><path d="M193.4 292.4 H197.9 V304.4" fill="none" stroke="#e8890c" stroke-width="2"/><path d="M180.2 297.0 V291.9 H183.2 A3 3 0 0 1 189.2 291.9 H192.2 V297.0 Z" fill="#fff" stroke="#7a7a7a" stroke-width="1.5"/><path d="M188.8 321.5 L195.8 306.5 L202.8 321.5 M191.3 316.3 H200.3" fill="none" stroke="#333" stroke-width="1.4"/></svg>
<div class="t " style="left:87.5px;top:341.11px;font-size:17px;color:#242424;font-weight:400;">Past</div>
<div class="t " style="left:87.5px;top:385.41px;font-size:17px;color:#242424;font-weight:400;">Set Def<span style="text-decoration:underline;text-underline-offset:2px">a</span>ult Paste...</div>
<div class="a" style="left:120.5px;top:338px;width:84px;height:34.5px;background:#fff;border:2px solid #555;border-radius:7px;box-sizing:border-box;box-shadow:0 4px 10px rgba(0,0,0,0.16);"></div>
<div class="t " style="left:126.5px;top:349.10px;font-size:15px;color:#666666;font-weight:400;">Picture (U)</div>
<div class="a" style="left:1552px;top:0px;width:1px;height:911px;background:#ffffff;"></div>
</body></html>
